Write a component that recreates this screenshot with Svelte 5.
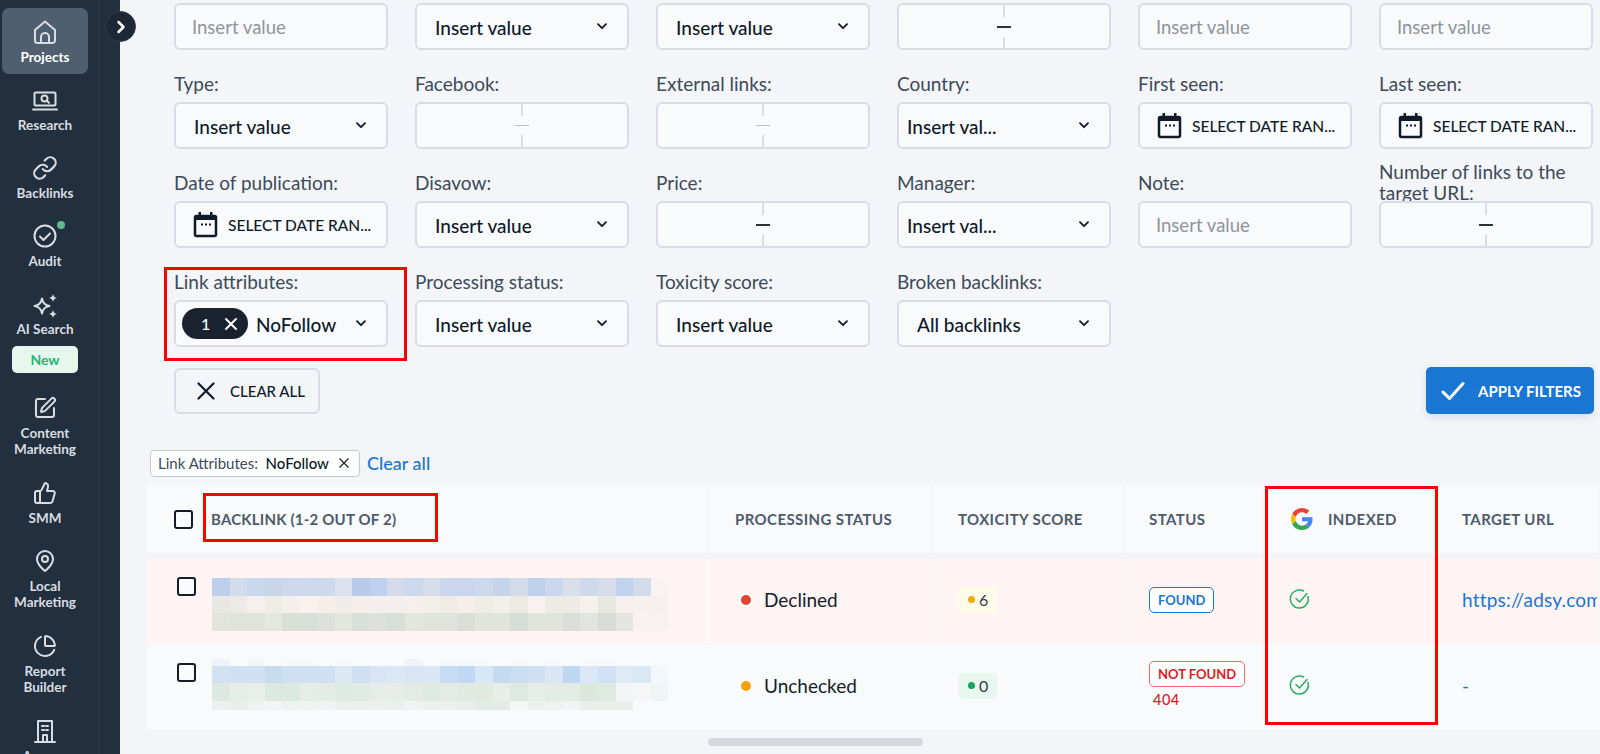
<script>
  const nav = [
    { label: ['Projects'], icon: 'home', active: true },
    { label: ['Research'], icon: 'research' },
    { label: ['Backlinks'], icon: 'link' },
    { label: ['Audit'], icon: 'audit', dot: true },
    { label: ['AI Search'], icon: 'ai', badge: 'New' },
    { label: ['Content', 'Marketing'], icon: 'pen' },
    { label: ['SMM'], icon: 'thumb' },
    { label: ['Local', 'Marketing'], icon: 'pin' },
    { label: ['Report', 'Builder'], icon: 'pie' },
    { label: ['Agency'], icon: 'agency' }
  ];

  const fields = [
    { kind: 'input' },
    { kind: 'select', value: 'Insert value' },
    { kind: 'select', value: 'Insert value' },
    { kind: 'range' },
    { kind: 'input' },
    { kind: 'input' },
    { label: 'Type:', kind: 'select', value: 'Insert value' },
    { label: 'Facebook:', kind: 'range', faded: true },
    { label: 'External links:', kind: 'range', faded: true },
    { label: 'Country:', kind: 'select', value: 'Insert val...', tight: true },
    { label: 'First seen:', kind: 'date' },
    { label: 'Last seen:', kind: 'date' },
    { label: 'Date of publication:', kind: 'date' },
    { label: 'Disavow:', kind: 'select', value: 'Insert value' },
    { label: 'Price:', kind: 'range' },
    { label: 'Manager:', kind: 'select', value: 'Insert val...', tight: true },
    { label: 'Note:', kind: 'input' },
    { label: 'Number of links to the target URL:', kind: 'range', two: true },
    { label: 'Link attributes:', kind: 'chip', value: 'NoFollow' },
    { label: 'Processing status:', kind: 'select', value: 'Insert value' },
    { label: 'Toxicity score:', kind: 'select', value: 'Insert value' },
    { label: 'Broken backlinks:', kind: 'select', value: 'All backlinks' }
  ];

  // blurred-out backlink cells, read off the screenshot
  const blurA = [
    { h: 18, c: 'bcd0ec d2dcec c9d7ed c9d6ea cdd8ec ccd8ec cfd9ec dde2ee b7cbe9 bdd0ec d4dcec ccd8ec d6dcea cbd7ec c9d6ec ccd8ec c5d4eb d3dbe9 bed0ea cad7ec d8deea d0d9ec d6dcea c0d2ee d4dcec f9f3f2' },
    { h: 17, c: 'e9e7e4 eceae6 f5f0ed eeece7 f4efec f7f2f0 f5eeeb f0ece9 f5efec f4efec f3efec f6efed f2eeea efebe7 f5eeea eeece7 f3efea ebeae5 f8f1f0 eeebe7 eeebe6 f6f1ee e8e8e2 f7f0ee f7f0ee f6efee' },
    { h: 18, c: 'e1e5de dfe3dc dfe3dc e4e6e0 d8dfd7 d8ded8 dce2db e2e6df d9dfd9 dce1dc d8dfd9 e3e5df dfe3dc dfe3dd d9dfd8 e0e4dd e0e4dd d6ddd6 e0e4dd e0e4dd d9dfd8 e2e5df d7ddd6 e4e5e0 f8f1f0 f8f1f0' }
  ];
  const blurB = [
    { h: 7, c: 'eef3fa f9fafc f2f5f9 f9fafc f7f8fa f7f8fa f9fafc f7f8fa f9fafc f9fafc f9fafc f0f3f8 f9fafc f5f7fb f6f7f9 f7f8fa f9fafc f6f7f9 f9fafc f7f8fa f9fafc f7f8fa f7f8fa f9fafc f9fafc f9fafc' },
    { h: 17, c: 'd0e1f2 cfe0f2 cfe0f2 c8dcef cee0f2 cfe0f2 cfe0f2 dde8f5 cfe0f2 d7e5f4 dae7f4 d7e5f4 d8e6f5 c8dcf3 c0d8f3 d8e7f6 c4daf1 cadef2 cee0f2 d9e7f4 c0d7f2 d9e7f6 cfe1f3 deebf5 d9e8f5 f3f6fa' },
    { h: 18, c: 'dde8e2 e4ede8 e8eee9 dbe8e0 dce9e1 e7ece7 e4ece6 deeae3 e1ebe5 e6ece8 e7ece8 e3ebe5 dee9e2 e4ebe6 e0eae3 e1e9e1 e8ede8 dee9e1 e6eee9 e2ebe4 e2ebe4 dbe6dc dde9e1 f4f5f7 f5f6f5 eff4f4' },
    { h: 9, c: 'ebf0f0 e8efeb eef2f0 f2f5f5 ecf2ee eef2f0 f0f3f3 eaf0ec eaf0ed ecf1ef eaf0ec f0f3f3 eaf0ec ebf1ee e8efec e2ece5 e2ece5 f4f7f6 ebf1ee eef2ef f1f4f5 e9f0ec e9f0ec e9f0ec f9fafc f9fafc' }
  ];

  const rows = [
    { tint: true, blur: blurA, dot: '#e2442f', status: 'Declined', tox: 6, toxClass: 'warn', found: true, url: 'https://adsy.com' },
    { blur: blurB, dot: '#f5a00e', status: 'Unchecked', tox: 0, toxClass: 'ok', found: false, url: '-' }
  ];
</script>

{#snippet chevron()}
  <svg class="chev" width="10" height="7" viewBox="0 0 10 7"><path d="M1 1.2 5 5.2l4-4" /></svg>
{/snippet}

{#snippet calendar()}
  <svg class="cal" width="25" height="27" viewBox="0 0 25 27">
    <rect class="cal-body" x="2" y="5" width="21" height="20" rx="1.5" />
    <path class="cal-top" d="M2 4h21v5H2zM5.5 1h2.5v5H5.500zM17 1h2.5v5H17z" />
    <path class="cal-dots" d="M8 13.500h2M12 13.500h2M16 13.500h2" />
  </svg>
{/snippet}

{#snippet check()}
  <svg width="22" height="22" viewBox="0 0 22 22" class="ok-check">
    <path d="M19 8.500A9 9 0 1 1 14.500 3" />
    <path d="M7 10.500l3.500 3.500L18 5.500" />
  </svg>
{/snippet}

{#snippet navIcon(name)}
  <svg class="nav-icon" width="32" height="32" viewBox="0 0 32 32">
    {#if name === 'home'}
      <path d="M6 14 16 5.500 26 14v10.500a2.500 2.500 0 0 1-2.500 2.500h-15A2.500 2.500 0 0 1 6 24.500z" />
      <path d="M12 27v-6a4 4 0 0 1 8 0v6" />
    {:else if name === 'research'}
      <rect x="5.500" y="8.500" width="21" height="13" rx="1" />
      <path d="M4 25.500h24" />
      <circle cx="15.500" cy="14.500" r="3" />
      <path d="M17.800 16.800l2.200 2" />
    {:else if name === 'link'}
      <g transform="translate(3 3) scale(1.08)">
        <path d="M10 13a5 5 0 0 0 7.540.54l3-3a5 5 0 0 0-7.070-7.070l-1.720 1.710" />
        <path d="M14 11a5 5 0 0 0-7.540-.54l-3 3a5 5 0 0 0 7.070 7.070l1.710-1.710" />
      </g>
    {:else if name === 'audit'}
      <circle cx="16" cy="16" r="10.500" />
      <path d="M11 16.500l3.500 3.500 6.500-6.500" />
    {:else if name === 'ai'}
      <g transform="translate(0 2)">
        <path d="M13 8.500Q14 15 20.500 16 14 17 13 23.500 12 17 5.500 16 12 15 13 8.500z" />
        <path class="solid" d="M24 4q.6 3.400 4 4-3.400.6-4 4-.6-3.400-4-4 3.400-.6 4-4zM24 20q.6 3.400 4 4-3.400.6-4 4-.6-3.400-4-4 3.400-.6 4-4z" />
      </g>
    {:else if name === 'pen'}
      <g transform="translate(4 4)">
        <path d="M12 3H5a2 2 0 0 0-2 2v14a2 2 0 0 0 2 2h14a2 2 0 0 0 2-2v-7" />
        <path d="M18.375 2.625a1 1 0 0 1 3 3l-9.013 9.014a2 2 0 0 1-.853.505l-2.873.84a.5.5 0 0 1-.62-.62l.84-2.873a2 2 0 0 1 .506-.852z" />
      </g>
    {:else if name === 'thumb'}
      <g transform="translate(4 4)">
        <path d="M7 10v12" />
        <path d="M15 5.880 14 10h5.830a2 2 0 0 1 1.920 2.560l-2.330 8A2 2 0 0 1 17.500 22H4a2 2 0 0 1-2-2v-8a2 2 0 0 1 2-2h2.760a2 2 0 0 0 1.790-1.110L12 2a3.130 3.130 0 0 1 3 3.880Z" />
      </g>
    {:else if name === 'pin'}
      <g transform="translate(4 4)">
        <path d="M20 10c0 6-8 12-8 12s-8-6-8-12a8 8 0 0 1 16 0Z" />
        <circle cx="12" cy="10" r="3" />
      </g>
    {:else if name === 'pie'}
      <g transform="translate(4 4)">
        <path d="M21 12c.552 0 1.005-.449.95-.998a10 10 0 0 0-8.953-8.951c-.55-.055-.998.398-.998.95v8a1 1 0 0 0 1 1z" />
        <path d="M21.210 15.890A10 10 0 1 1 8 2.830" />
      </g>
    {:else}
      <path d="M9 27V6h14v21M6 27h20" />
      <path d="M13 11h2M17 11h2M13 15h2M17 15h2M14 27v-7h4v7" />
    {/if}
  </svg>
{/snippet}

<div class="app">
  <nav class="sidebar">
    {#each nav as item}
      <div class="nav-item" class:active={item.active} class:two-line={item.label.length > 1}>
        <div class="nav-glyph">
          {@render navIcon(item.icon)}
          {#if item.dot}<span class="nav-dot"></span>{/if}
        </div>
        {#each item.label as line}
          <span class="nav-label">{line}</span>
        {/each}
        {#if item.badge}<span class="nav-badge">{item.badge}</span>{/if}
      </div>
    {/each}
  </nav>

  <button class="collapse" aria-label="Expand menu">
    <svg width="12" height="14" viewBox="0 0 12 14"><path d="M3.500 2 8.500 7l-5 5" /></svg>
  </button>

  <main class="main">
    <section class="filters">
      {#each fields as f}
        <div class="field">
          {#if f.label}
            <div class="label" class:two={f.two}><span>{f.label}</span></div>
          {/if}
          {#if f.kind === 'input'}
            <div class="box placeholder"><span>Insert value</span></div>
          {:else if f.kind === 'select'}
            <div class="box select" class:tight={f.tight}>
              <span>{f.value}</span>
              {@render chevron()}
            </div>
          {:else if f.kind === 'range'}
            <div class="box range" class:faded={f.faded}>
              <i class="tick"></i><i class="dash"></i><i class="tick"></i>
            </div>
          {:else if f.kind === 'date'}
            <div class="box date">
              {@render calendar()}
              <span>SELECT DATE RAN...</span>
            </div>
          {:else}
            <div class="box select chip-box">
              <span class="chip">
                <b>1</b>
                <svg width="14" height="14" viewBox="0 0 14 14"><path d="M2 2l10 10M12 2 2 12" /></svg>
              </span>
              <span class="chip-value">{f.value}</span>
              {@render chevron()}
            </div>
          {/if}
        </div>
      {/each}
    </section>

    <div class="actions">
      <button class="clear-btn">
        <svg width="18" height="18" viewBox="0 0 18 18"><path d="M1.500 1.500l15 15M16.500 1.500l-15 15" /></svg>
        CLEAR ALL
      </button>
      <button class="apply-btn">
        <svg width="24" height="20" viewBox="0 0 24 20"><path d="M2 11l6.500 6.500L22 2.500" /></svg>
        APPLY FILTERS
      </button>
    </div>

    <div class="applied">
      <span class="tag">
        Link Attributes:&nbsp; <b>NoFollow</b>
        <svg width="12" height="12" viewBox="0 0 12 12"><path d="M1.500 1.500l9 9M10.500 1.500l-9 9" /></svg>
      </span>
      <span class="clear-link">Clear all</span>
    </div>

    <section class="table">
      <div class="tr head">
        <div class="td first">
          <span class="checkbox"></span>
          <span class="backlink-title">BACKLINK (1-2 OUT OF 2)</span>
        </div>
        <div class="td">PROCESSING STATUS</div>
        <div class="td">TOXICITY SCORE</div>
        <div class="td">STATUS</div>
        <div class="td">
          <svg class="google" width="22" height="22" viewBox="0 0 48 48">
            <path fill="#EA4335" d="M24 9.500c3.540 0 6.710 1.220 9.210 3.600l6.850-6.850C35.900 2.380 30.470 0 24 0 14.620 0 6.510 5.380 2.560 13.220l7.980 6.190C12.430 13.720 17.740 9.500 24 9.500z"/>
            <path fill="#4285F4" d="M46.980 24.550c0-1.570-.15-3.090-.38-4.550H24v9.020h12.940c-.58 2.960-2.260 5.480-4.780 7.180l7.730 6c4.510-4.180 7.090-10.360 7.090-17.650z"/>
            <path fill="#FBBC05" d="M10.530 28.590c-.48-1.450-.76-2.990-.76-4.590s.27-3.140.76-4.590l-7.980-6.190C.92 16.460 0 20.120 0 24c0 3.880.92 7.540 2.560 10.780l7.970-6.190z"/>
            <path fill="#34A853" d="M24 48c6.480 0 11.930-2.130 15.890-5.810l-7.730-6c-2.150 1.450-4.920 2.300-8.160 2.300-6.260 0-11.570-4.220-13.470-9.910l-7.980 6.190C6.510 42.620 14.620 48 24 48z"/>
          </svg>
          INDEXED
        </div>
        <div class="td">TARGET URL</div>
      </div>

      {#each rows as r}
        <div class="tr body" class:tint={r.tint}>
          <div class="td first">
            <span class="checkbox"></span>
            <div class="blur" class:blur-a={r.tint}>
              {#each r.blur as line}
                <div class="blur-line" style="height: {line.h}px">
                  {#each line.c.split(' ') as color}
                    <i style="background: #{color}"></i>
                  {/each}
                </div>
              {/each}
            </div>
          </div>
          <div class="td state-cell">
            <span class="state-dot" style="background: {r.dot}"></span>
            <span class="state">{r.status}</span>
          </div>
          <div class="td">
            <span class="tox {r.toxClass}"><i></i>{r.tox}</span>
          </div>
          <div class="td status">
            {#if r.found}
              <span class="badge found">FOUND</span>
            {:else}
              <span class="badge missing">NOT FOUND</span>
              <span class="code">404</span>
            {/if}
          </div>
          <div class="td">{@render check()}</div>
          <div class="td url">{r.url}</div>
        </div>
      {/each}
    </section>

    <div class="scrollbar"></div>
  </main>

  <div class="mark mark-attrs"></div>
  <div class="mark mark-title"></div>
  <div class="mark mark-indexed"></div>
</div>

<style>
  :global(body) {
    margin: 0;
    background: #f3f5f9;
  }

  .app {
    position: relative;
    display: flex;
    width: 1600px;
    height: 754px;
    overflow: hidden;
    font-family: Lato, "Liberation Sans", sans-serif;
    color: #0f1a2a;
    background: #f3f5f9;
  }

  /* sidebar */
  .sidebar {
    flex: none;
    box-sizing: border-box;
    width: 120px;
    height: 754px;
    padding: 8px 0 0 2px;
    background: linear-gradient(90deg, #222f3e 98px, #2e3b49 98px, #2e3b49 99px, #222f3e 99px);
    overflow: hidden;
  }

  .nav-item {
    position: relative;
    box-sizing: border-box;
    display: flex;
    flex-direction: column;
    align-items: center;
    width: 86px;
    padding: 8px 0 11px;
  }

  .nav-item.two-line {
    padding-bottom: 12px;
  }

  .nav-item.active {
    margin-bottom: 2px;
    padding-bottom: 9px;
    border-radius: 7px;
    background: #4f5f70;
  }

  .nav-item.active .nav-label {
    color: #fff;
  }

  .nav-glyph {
    position: relative;
    height: 33px;
  }

  .nav-icon {
    display: block;
    fill: none;
    stroke: #d9dde1;
    stroke-width: 2;
    stroke-linecap: round;
    stroke-linejoin: round;
  }

  .nav-icon .solid {
    fill: #d9dde1;
    stroke: none;
  }

  .nav-dot {
    position: absolute;
    top: 1px;
    right: -4px;
    width: 8px;
    height: 8px;
    border-radius: 50%;
    background: #5cbb8b;
  }

  .nav-label {
    font-size: 13.5px;
    font-weight: 700;
    line-height: 16px;
    color: #d9dde1;
  }

  .nav-badge {
    box-sizing: border-box;
    width: 66px;
    height: 27px;
    margin-top: 9px;
    border-radius: 5px;
    background: #e6f8ee;
    color: #2fb170;
    font-size: 14px;
    font-weight: 700;
    line-height: 27px;
    text-align: center;
  }

  .collapse {
    position: absolute;
    top: 11px;
    left: 105px;
    width: 31px;
    height: 31px;
    padding: 0;
    display: flex;
    align-items: center;
    justify-content: center;
    border: 1px solid #303d4c;
    border-radius: 50%;
    background: #1d2836;
  }

  .collapse path {
    fill: none;
    stroke: #fff;
    stroke-width: 2.5;
    stroke-linecap: round;
    stroke-linejoin: round;
  }

  /* filters */
  .main {
    flex: 1;
    min-width: 0;
  }

  .filters {
    display: grid;
    grid-template-columns: repeat(6, 214px);
    column-gap: 27px;
    row-gap: 22px;
    padding: 3px 0 0 54px;
  }

  .field {
    display: flex;
    flex-direction: column;
    justify-content: flex-end;
  }

  .label {
    display: flex;
    align-items: flex-end;
    height: 22px;
    margin-bottom: 8px;
    font-size: 19px;
    line-height: 21px;
    color: #3d4a58;
    white-space: nowrap;
  }

  .label.two {
    height: 32px;
    margin-top: -4px;
    margin-bottom: -2px;
    white-space: normal;
  }

  .box {
    position: relative;
    box-sizing: border-box;
    display: flex;
    align-items: center;
    height: 47px;
    padding: 0 18px;
    border: 2px solid #d9dce6;
    border-radius: 6px;
    background: #f9fafc;
    font-size: 19px;
    font-weight: 500;
  }

  .box > span {
    padding-top: 1px;
  }

  .placeholder {
    padding-left: 16px;
    font-size: 18.5px;
    font-weight: 400;
    color: #8f949c;
  }

  .select {
    justify-content: space-between;
    padding-right: 20px;
  }

  .select.tight {
    padding-left: 8px;
  }

  .chev {
    flex: none;
    fill: none;
    stroke: #0f1a2a;
    stroke-width: 1.8;
    stroke-linecap: round;
    stroke-linejoin: round;
  }

  .range {
    flex-direction: column;
    padding: 0;
  }

  .tick {
    flex: 1;
    width: 2px;
    background: #d9dce6;
  }

  .dash {
    width: 14px;
    height: 2px;
    margin: 9px 0;
    background: #2a3340;
  }

  .range.faded .dash {
    height: 1px;
    background: #b9bdc5;
  }

  .date {
    gap: 10px;
    padding-left: 17px;
    padding-right: 0;
    font-size: 15.5px;
    white-space: nowrap;
  }

  .cal {
    flex: none;
  }

  .cal-top {
    fill: #0f1a2a;
  }

  .cal-body {
    fill: #f9fafc;
    stroke: #0f1a2a;
    stroke-width: 2.5;
  }

  .cal-dots {
    fill: none;
    stroke: #0f1a2a;
    stroke-width: 2;
  }

  .chip-box {
    padding-left: 6px;
  }

  .box > .chip {
    display: flex;
    align-items: center;
    justify-content: space-between;
    box-sizing: border-box;
    width: 66px;
    height: 31px;
    padding: 0 10px 0 19px;
    border-radius: 16px;
    background: #1a2230;
    color: #fff;
    font-size: 16px;
  }

  .chip b {
    font-weight: 500;
  }

  .chip path {
    fill: none;
    stroke: #fff;
    stroke-width: 2;
    stroke-linecap: round;
  }

  .chip-value {
    margin-left: 8px;
    margin-right: auto;
  }

  /* actions */
  .actions {
    display: flex;
    justify-content: space-between;
    align-items: center;
    height: 47px;
    margin-top: 20px;
    padding: 0 6px 0 54px;
  }

  button {
    font-family: inherit;
  }

  .clear-btn {
    box-sizing: border-box;
    display: flex;
    align-items: center;
    gap: 15px;
    width: 146px;
    height: 46px;
    padding: 0 0 0 21px;
    border: 2px solid #d9dce6;
    border-radius: 6px;
    background: #f3f5f9;
    color: #0f1a2a;
    font-size: 15px;
    font-weight: 500;
  }

  .clear-btn path {
    fill: none;
    stroke: #0f1a2a;
    stroke-width: 2.2;
    stroke-linecap: round;
  }

  .apply-btn {
    display: flex;
    align-items: center;
    gap: 13px;
    box-sizing: border-box;
    width: 168px;
    height: 47px;
    padding: 0 0 0 15px;
    border: 0;
    border-radius: 5px;
    background: #1976d2;
    box-shadow: 0 3px 8px rgba(25, 60, 110, 0.12);
    color: #fff;
    font-size: 15px;
    font-weight: 700;
  }

  .apply-btn path {
    fill: none;
    stroke: #fff;
    stroke-width: 3;
    stroke-linecap: round;
    stroke-linejoin: round;
  }

  /* applied filters */
  .applied {
    display: flex;
    align-items: center;
    gap: 7px;
    height: 28px;
    margin-top: 35px;
    padding-left: 30px;
  }

  .tag {
    box-sizing: border-box;
    display: flex;
    align-items: center;
    width: 210px;
    height: 27px;
    padding-left: 7px;
    border: 1px solid #c6c9cf;
    border-radius: 4px;
    background: #fff;
    color: #3d4a58;
    font-size: 15px;
    white-space: pre;
  }

  .tag b {
    font-weight: 500;
    color: #0f1a2a;
  }

  .tag svg {
    margin-left: 9px;
  }

  .tag path {
    fill: none;
    stroke: #1a2230;
    stroke-width: 1.3;
  }

  .clear-link {
    color: #1976d2;
    font-size: 18px;
    font-weight: 500;
  }

  /* table */
  .table {
    margin: 8px 0 0 27px;
  }

  .tr {
    display: grid;
    grid-template-columns: 564px 223px 191px 142px 171px 162px;
  }

  .td {
    box-sizing: border-box;
    display: flex;
    align-items: center;
    min-width: 0;
    overflow: hidden;
    white-space: nowrap;
    padding-left: 24px;
    border-right: 3px solid rgba(243, 245, 249, 0.7);
  }

  .td.first {
    padding-left: 27px;
    border-right-width: 5px;
  }

  .head {
    height: 68px;
    margin-bottom: 6px;
    background: #f9fafc;
    color: #4d5b6b;
    font-size: 15px;
    font-weight: 700;
    letter-spacing: 0.4px;
  }

  .google {
    flex: none;
    margin-right: 15px;
  }

  .backlink-title {
    margin-left: 18px;
    letter-spacing: 0.2px;
  }

  .body {
    height: 85px;
    margin-bottom: 1px;
    background: #f9fafc;
    font-size: 19px;
  }

  .body.tint {
    background: #fff4f4;
  }

  .body .td {
    padding-bottom: 4px;
    border-right-color: rgba(249, 250, 252, 0.35);
  }

  .body .td.first {
    align-items: flex-start;
    padding: 18px 0 0 30px;
  }

  .checkbox {
    flex: none;
    box-sizing: border-box;
    width: 19px;
    height: 19px;
    border: 2px solid #141c28;
    border-radius: 3px;
    background: #fafbfd;
  }

  .blur {
    margin: -4px 0 0 16px;
  }

  .blur.blur-a {
    margin-top: 1px;
  }

  .blur-line {
    display: flex;
  }

  .blur-line i {
    display: block;
    width: 17.56px;
    height: 100%;
  }

  .body .state-cell {
    padding-left: 30px;
  }

  .state-dot {
    width: 10px;
    height: 10px;
    margin-right: 13px;
    border-radius: 50%;
    box-shadow: 0 0 0 2px #fff;
  }

  .state {
    color: #141c28;
  }

  .tox {
    display: flex;
    align-items: center;
    gap: 4px;
    box-sizing: border-box;
    height: 26px;
    padding: 0 9px 0 10px;
    border-radius: 5px;
    font-size: 16px;
    color: #333b46;
  }

  .tox i {
    width: 7px;
    height: 7px;
    border-radius: 50%;
  }

  .tox.warn {
    background: #fefbe8;
  }

  .tox.warn i {
    background: #f5a80b;
  }

  .tox.ok {
    background: #e8f8ef;
  }

  .tox.ok i {
    background: #1aa260;
  }

  .body .status {
    flex-direction: column;
    align-items: flex-start;
    justify-content: center;
    padding-bottom: 7px;
  }

  .badge {
    box-sizing: border-box;
    height: 26px;
    padding: 0 8px;
    border: 1px solid;
    border-radius: 5px;
    background: #fff;
    font-size: 13px;
    font-weight: 700;
    line-height: 24px;
  }

  .badge.found {
    margin-top: 3px;
    border-color: #1976d2;
    color: #1976d2;
  }

  .badge.missing {
    border-color: #ef6a6a;
    color: #dd1c24;
  }

  .code {
    margin: 5px 0 0 4px;
    color: #dd1c24;
    font-size: 14.5px;
    font-weight: 500;
    letter-spacing: 0.5px;
    line-height: 16px;
  }

  .ok-check {
    margin: -2px 0 0 -2px;
    fill: none;
    stroke: #27ae60;
    stroke-width: 1.5;
    stroke-linecap: round;
    stroke-linejoin: round;
  }

  .url {
    color: #1976d2;
    letter-spacing: 0.2px;
  }

  .scrollbar {
    width: 215px;
    height: 8px;
    margin: 8px 0 0 588px;
    border-radius: 4px;
    background: #d5d8e0;
  }

  /* red annotation boxes drawn over the screenshot */
  .mark {
    position: absolute;
    box-sizing: border-box;
    border: 3px solid #f00;
  }

  .mark-attrs {
    left: 164px;
    top: 267px;
    width: 243px;
    height: 94px;
  }

  .mark-title {
    left: 203px;
    top: 493px;
    width: 235px;
    height: 49px;
  }

  .mark-indexed {
    left: 1265px;
    top: 486px;
    width: 173px;
    height: 239px;
  }
</style>
